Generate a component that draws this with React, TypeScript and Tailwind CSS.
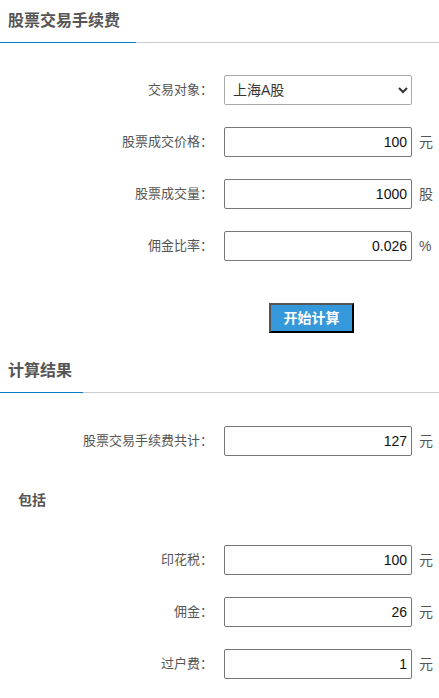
import { ReactNode } from 'react'

const font = "font-['Liberation_Sans','Noto_Sans_CJK_SC',sans-serif]"

function SectionTitle({ title, width }: { title: string; width: string }) {
  return (
    <div className="flex border-b border-[#cccccc]">
      <div
        className={`${width} h-[43px] -mb-px flex items-center px-2 border-b border-[#0a7acb] text-[16px] font-bold text-[#555555]`}
      >
        {title}
      </div>
    </div>
  )
}

function Row({ label, children, unit }: { label: string; children: ReactNode; unit?: string }) {
  return (
    <div className="flex items-center h-[30px]">
      <div className="w-[213px] text-right text-[13px] text-[#555555]">{label}</div>
      <div className="ml-[11px] w-[188px] h-[30px]">{children}</div>
      {unit && <div className="ml-[7px] text-[14px] text-[#555555]">{unit}</div>}
    </div>
  )
}

function NumInput({ value }: { value: string }) {
  return (
    <input
      readOnly
      value={value}
      className="w-full h-full border border-[#767676] rounded-[2px] text-right pr-[4px] text-[14px] text-[#111111] bg-white outline-none"
    />
  )
}

export default function App() {
  return (
    <div className={`${font} w-[439px] min-h-[698px] bg-white`}>
      {/* 输入部分 */}
      <SectionTitle title="股票交易手续费" width="w-[136px]" />

      <div className="flex flex-col gap-[22px] mt-[32px]">
        <Row label="交易对象：">
          <select
            defaultValue="sh"
            className="w-full h-full border border-[#a9a9a9] rounded-[2px] pl-[4px] text-[14px] text-[#333333] bg-white"
          >
            <option value="sh">上海A股</option>
            <option value="sz">深圳A股</option>
          </select>
        </Row>
        <Row label="股票成交价格：" unit="元">
          <NumInput value="100" />
        </Row>
        <Row label="股票成交量：" unit="股">
          <NumInput value="1000" />
        </Row>
        <Row label="佣金比率：" unit="%">
          <NumInput value="0.026" />
        </Row>
      </div>

      <div className="mt-[42px] ml-[269px]">
        <button className="w-[85px] h-[30px] bg-[#3498db] text-white text-[14px] font-bold border-2 border-t-[#555555] border-l-[#555555] border-r-black border-b-black">
          开始计算
        </button>
      </div>

      {/* 结果部分 */}
      <div className="mt-[17px]">
        <SectionTitle title="计算结果" width="w-[83px]" />
      </div>

      <div className="mt-[33px]">
        <Row label="股票交易手续费共计：" unit="元">
          <NumInput value="127" />
        </Row>
      </div>

      <div className="mt-[34px] h-[20px] pl-[18px] flex items-center text-[14px] font-bold text-[#555555]">
        包括
      </div>

      <div className="flex flex-col gap-[22px] mt-[35px] pb-[20px]">
        <Row label="印花税：" unit="元">
          <NumInput value="100" />
        </Row>
        <Row label="佣金：" unit="元">
          <NumInput value="26" />
        </Row>
        <Row label="过户费：" unit="元">
          <NumInput value="1" />
        </Row>
      </div>
    </div>
  )
}
